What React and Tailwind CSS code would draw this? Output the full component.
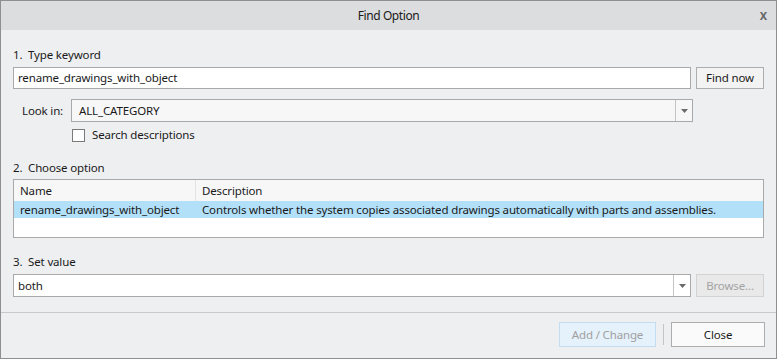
const font = { fontFamily: '"Noto Sans", "Open Sans", sans-serif' };

function Arrow() {
  return (
    <div className="w-[17px] h-full flex items-center justify-center border-l border-[#c4c4c4]">
      <svg width="7" height="4" viewBox="0 0 7 4">
        <path d="M0 0 H7 L3.5 4 Z" fill="#6b6b6b" />
      </svg>
    </div>
  );
}

export default function App() {
  return (
    <div className="w-[777px] h-[359px] bg-[#eeeff1] text-[11.5px] tracking-[-0.15px] text-[#1a1a1a] flex flex-col border border-[#8f8f8f] overflow-hidden" style={font}>
      <div className="h-[29px] shrink-0 bg-[#dcdddf] relative flex items-center justify-center">
        <span className="text-[12px] tracking-[-0.4px]">Find Option</span>
        <span className="absolute right-[9px] top-[7px] text-[11px] font-bold text-[#666]">X</span>
      </div>

      <div className="flex flex-col px-[12px]">
        <div className="mt-[17px] h-[16px] leading-[16px]">1.&nbsp; Type keyword</div>
        <div className="mt-[4px] flex gap-[5px]">
          <div className="flex-1 h-[22px] bg-white border border-[#a9a9a9] flex items-center px-[4px]">rename_drawings_with_object</div>
          <div className="w-[68px] h-[22px] bg-[#f3f3f3] border border-[#adadad] flex items-center justify-center">Find now</div>
        </div>
        <div className="mt-[10px] flex items-center">
          <span className="w-[58px] pl-[9px]">Look in:</span>
          <div className="w-[622px] h-[23px] bg-[#f7f7f7] border border-[#a9a9a9] flex items-center">
            <span className="flex-1 px-[7px]">ALL_CATEGORY</span>
            <Arrow />
          </div>
        </div>
        <div className="mt-[5px] h-[16px] ml-[59px] flex items-center gap-[7px]">
          <div className="w-[13px] h-[13px] bg-white border border-[#7a7a7a]" />
          <span>Search descriptions</span>
        </div>

        <div className="mt-[17px] h-[16px] leading-[16px]">2.&nbsp; Choose option</div>
        <div className="mt-[3px] h-[59px] bg-white border border-[#a9a9a9] flex flex-col">
          <div className="h-[21px] bg-[#f7f7f7] flex">
            <div className="w-[182px] border-r border-[#e3e3e3] flex items-center pl-[6px]">Name</div>
            <div className="flex-1 flex items-center pl-[6px]">Description</div>
          </div>
          <div className="h-[17px] bg-[#b2e0f9] flex">
            <div className="w-[182px] flex items-center pl-[6px]">rename_drawings_with_object</div>
            <div className="flex-1 flex items-center pl-[6px]">Controls whether the system copies associated drawings automatically with parts and assemblies.</div>
          </div>
        </div>

        <div className="mt-[16px] h-[16px] leading-[16px]">3.&nbsp; Set value</div>
        <div className="mt-[4px] flex gap-[5px]">
          <div className="flex-1 h-[23px] bg-white border border-[#a9a9a9] flex items-center">
            <span className="flex-1 px-[4px]">both</span>
            <Arrow />
          </div>
          <div className="w-[68px] h-[23px] bg-[#e9e9ea] border border-[#d3d3d3] text-[#a3a3a3] flex items-center justify-center">Browse...</div>
        </div>
      </div>

      <div className="mt-[15px] border-t border-[#c9c9c9] flex justify-end items-center px-[11px] pt-[9px]">
        <div className="w-[97px] h-[25px] bg-[#e5f1fb] border border-[#c3dcef] text-[#a0a0a0] flex items-center justify-center">Add / Change</div>
        <div className="w-px h-[21px] bg-[#c4c4c4] mx-[7px]" />
        <div className="w-[94px] h-[25px] bg-[#fafafa] border border-[#adadad] flex items-center justify-center">Close</div>
      </div>
    </div>
  );
}
